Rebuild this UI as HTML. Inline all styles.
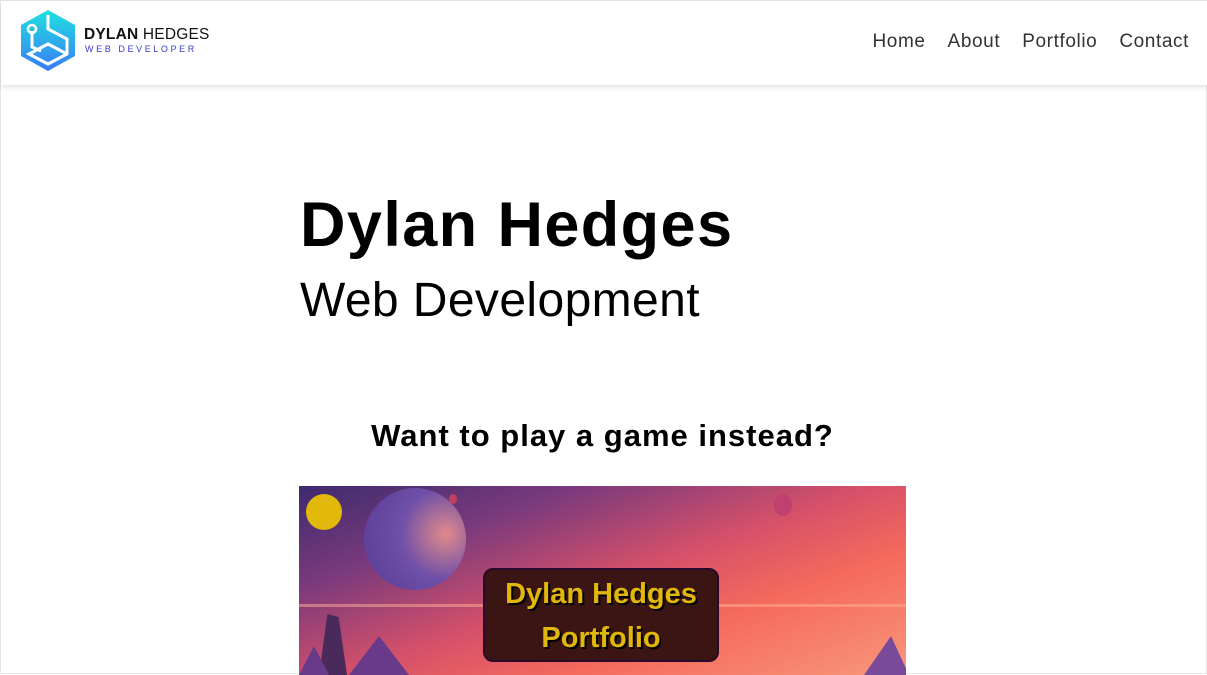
<!DOCTYPE html>
<html><head><meta charset="utf-8"><style>
*{margin:0;padding:0;box-sizing:border-box}
body{width:1207px;height:674px;overflow:hidden;background:#fff;font-family:"Liberation Sans",sans-serif;border:1px solid #e6e6e6;position:relative}
header{position:absolute;left:0;top:0;width:1207px;height:84px;background:#fff;box-shadow:0 2px 5px rgba(0,0,0,.12)}
nav{position:absolute;right:19px;top:30px;font-size:19px;color:#333;letter-spacing:0.6px}
nav span{margin-left:22px}
h1{position:absolute;left:299px;top:188px;font-size:63px;font-weight:bold;color:#000;letter-spacing:1.4px}
h2{position:absolute;left:299px;top:272px;font-size:48px;font-weight:normal;color:#000;letter-spacing:0.4px}
h3{position:absolute;left:0;width:1203px;text-align:center;top:417px;font-size:31px;font-weight:bold;color:#000;letter-spacing:1px}
.game{position:absolute;left:298px;top:485px;width:607px;height:189px;overflow:hidden;
background:linear-gradient(160deg,#3d2b6e 0%,#7a3a7c 25%,#d4506a 50%,#f56a5c 70%,#f8977a 100%)}
.box{position:absolute;left:184px;top:82px;width:236px;height:94px;border-radius:10px;background:#3b1414;border:2px solid #2a0a2a;text-align:center;color:#e0b70a;font-weight:bold;font-size:29px;line-height:44px;padding-top:2px;text-shadow:2px 2px 0 #000}
</style></head><body>
<header>
<svg style="position:absolute;left:18px;top:8px" width="58" height="63" viewBox="0 0 58 63">
<defs><linearGradient id="g" x1="0" y1="0" x2="0" y2="1"><stop offset="0" stop-color="#1fe0e0"/><stop offset="1" stop-color="#3a7cf5"/></linearGradient></defs>
<polygon points="29,1 56,16 56,47 29,62 2,47 2,16" fill="url(#g)"/>
<path d="M29,6 L29,20 L48,30 L48,45 L29,55 L10,45 L29,35 L48,45 M13,22 L13,38 L22,42" fill="none" stroke="#fff" stroke-width="3"/>
<circle cx="13" cy="20" r="4" fill="none" stroke="#fff" stroke-width="2.5"/>
</svg>
<div style="position:absolute;left:83px;top:25px;font-size:15.5px;color:#111;letter-spacing:0.2px"><b>DYLAN</b> HEDGES</div>
<div style="position:absolute;left:84px;top:43px;font-size:9px;color:#3a3ad0;letter-spacing:2.6px">WEB DEVELOPER</div>
<nav><span>Home</span><span>About</span><span>Portfolio</span><span>Contact</span></nav>
</header>
<h1>Dylan Hedges</h1>
<h2>Web Development</h2>
<h3>Want to play a game instead?</h3>
<div class="game">
<div style="position:absolute;left:7px;top:8px;width:36px;height:36px;border-radius:50%;background:#e2b80a"></div>
<div style="position:absolute;left:65px;top:2px;width:102px;height:102px;border-radius:50%;background:radial-gradient(circle at 80% 45%,#e08a8a,#7050a8 45%,#553a95)"></div>
<div style="position:absolute;left:475px;top:8px;width:18px;height:22px;border-radius:50%;background:#c04070"></div>
<div style="position:absolute;left:150px;top:8px;width:8px;height:10px;border-radius:50%;background:#c04060"></div>
<div style="position:absolute;left:0;top:118px;width:607px;height:3px;background:rgba(255,180,150,.5)"></div>
<div style="position:absolute;left:20px;top:128px;width:28px;height:61px;background:#4a2a5a;clip-path:polygon(30% 0,70% 5%,100% 100%,0 100%)"></div>
<div style="position:absolute;left:50px;top:150px;width:60px;height:39px;background:#6a3a8a;clip-path:polygon(50% 0,100% 100%,0 100%)"></div>
<div style="position:absolute;left:0;top:160px;width:30px;height:29px;background:#6a3a8a;clip-path:polygon(50% 0,100% 100%,0 100%)"></div>
<div style="position:absolute;left:565px;top:150px;width:45px;height:39px;background:#7a4a9a;clip-path:polygon(60% 0,100% 100%,0 100%)"></div>
<div class="box">Dylan Hedges<br>Portfolio</div>
</div>
</body></html>
